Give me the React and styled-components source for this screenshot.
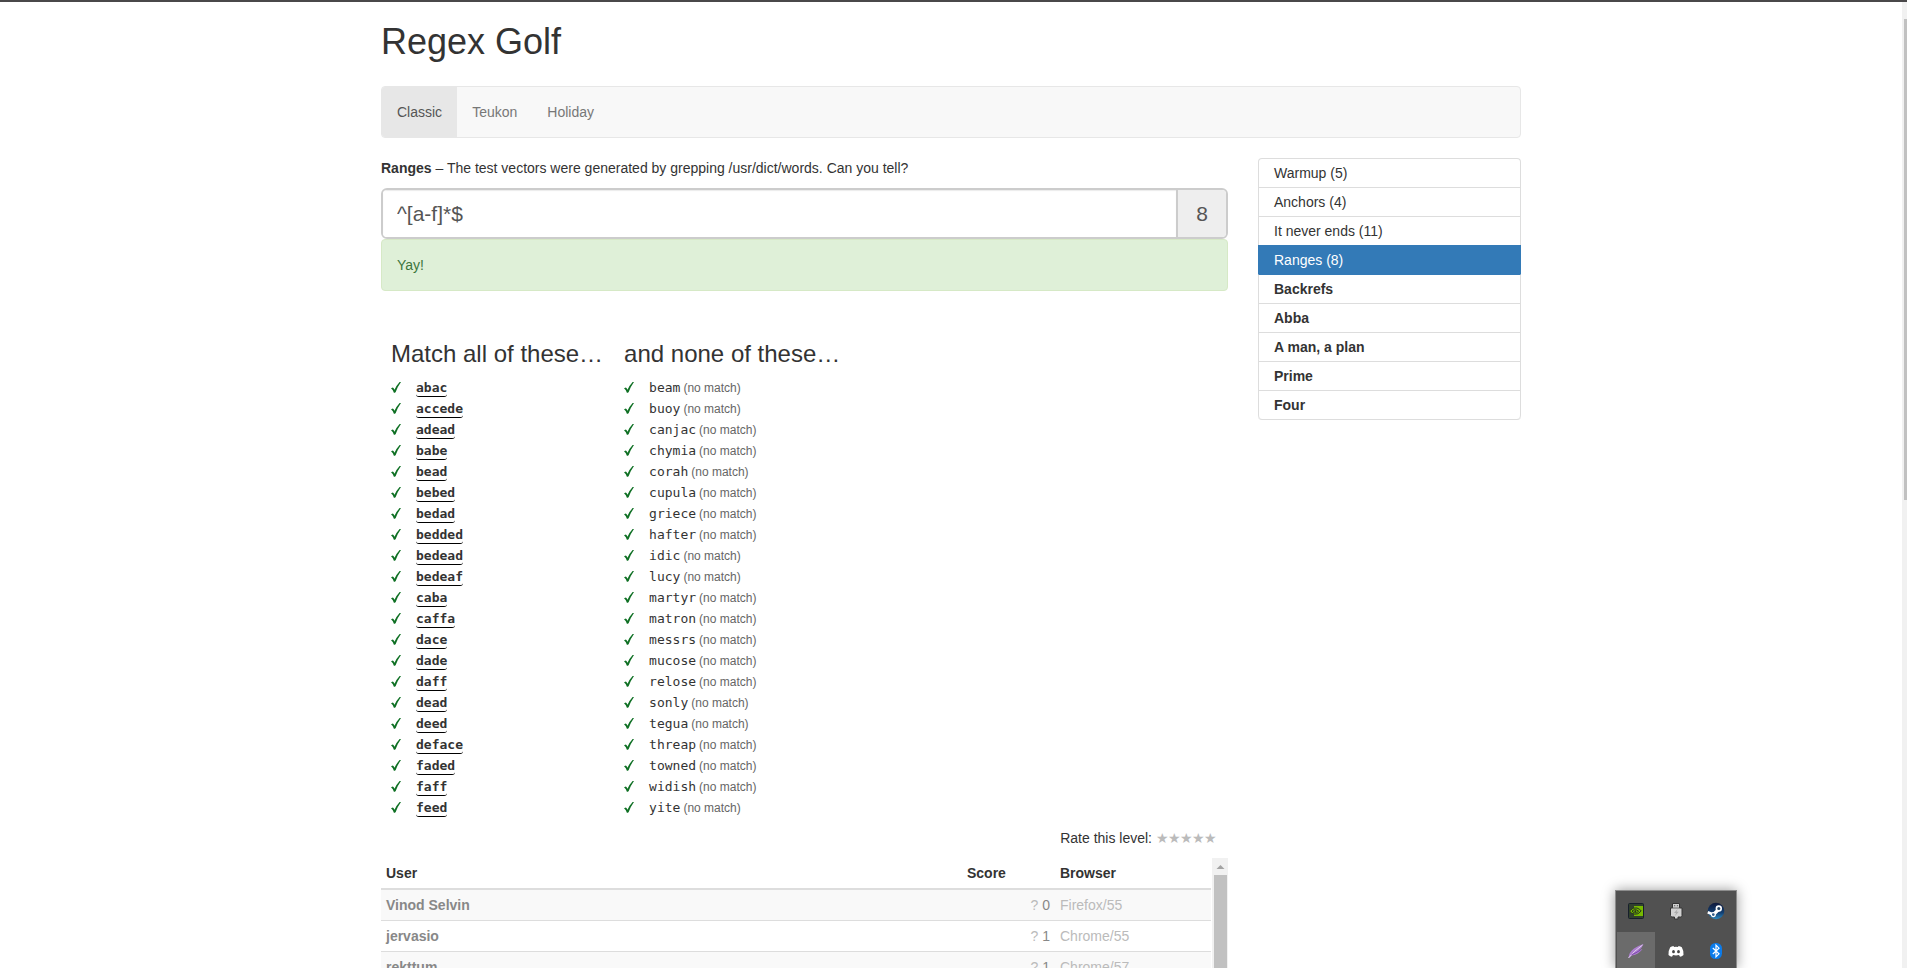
import React, { useState } from "react";
import styled, { createGlobalStyle, css } from "styled-components";

const GlobalStyle = createGlobalStyle`
  *, *::before, *::after { box-sizing: border-box; }
  html, body { margin: 0; height: 100%; overflow: hidden; }
  body {
    background: #fff;
    color: #333;
    font-family: "Liberation Sans", Arial, sans-serif;
    font-size: 14px;
    line-height: 20px;
  }
`;

const Page = styled.div`
  height: 100vh;
  display: flex;
  flex-direction: column;
  overflow: hidden;
`;

const WindowEdge = styled.div`
  flex: none;
  height: 2px;
  background: #4a484a;
`;

const Viewport = styled.div`
  flex: 1;
  min-height: 0;
  display: flex;
`;

const Scroller = styled.div`
  flex: 1;
  min-width: 0;
  overflow: hidden;
`;

const PageScrollbar = styled.div`
  flex: none;
  width: 5px;
  padding: 17px 0 0 2px;
  background: #f1f1f1;
`;

const PageThumb = styled.div`
  height: calc(50% + 6px);
  background: #c1c1c1;
`;

const Container = styled.div`
  max-width: 1170px;
  margin: 0 auto;
  padding: 20px 15px;
`;

const Title = styled.h1`
  margin: 0 0 24px;
  font-size: 36px;
  font-weight: 500;
  line-height: 40px;
`;

const Navbar = styled.nav`
  display: flex;
  margin-bottom: 20px;
  border: 1px solid #e7e7e7;
  border-radius: 4px;
  background: #f8f8f8;
  overflow: hidden;
`;

const NavLink = styled.a`
  padding: 15px;
  color: ${(p) => (p.$active ? "#555" : "#777")};
  background: ${(p) => (p.$active ? "#e7e7e7" : "transparent")};
  text-decoration: none;
`;

const Columns = styled.div`
  display: grid;
  grid-template-columns: minmax(0, 1fr) 263px;
  gap: 30px;
  align-items: start;
`;

const Description = styled.p`
  margin: 0 0 10px;
`;

const InputGroup = styled.div`
  display: flex;
  height: 51px;
  border: 2px solid #ccc;
  border-radius: 6px;
  overflow: hidden;
  color: #555;
  font-size: 21px;
`;

const RegexInput = styled.input`
  flex: 1;
  min-width: 0;
  padding: 0 14px;
  border: 0;
  outline: 0;
  background: #fff;
  box-shadow: inset 0 1px 1px rgba(0, 0, 0, 0.08);
  color: inherit;
  font: inherit;
`;

const Points = styled.output`
  display: flex;
  align-items: center;
  justify-content: center;
  width: 50px;
  border-left: 2px solid #ccc;
  background: #eee;
`;

const Alert = styled.div`
  margin-bottom: 50px;
  padding: 15px;
  border: 1px solid #d6e9c6;
  border-radius: 4px;
  background: #dff0d8;
  color: #3c763d;
`;

const Vectors = styled.div`
  display: flex;
  gap: 21px;
  padding: 0 10px;
  margin-bottom: 10px;
`;

const VectorTitle = styled.h3`
  margin: 0 0 10px;
  font-size: 24px;
  font-weight: 500;
  line-height: 26px;
`;

const WordList = styled.ul`
  margin: 0;
  padding: 0;
  list-style: none;
`;

const WordRow = styled.li`
  display: flex;
  align-items: center;
  height: 21px;
  line-height: 21px;
`;

const Tick = styled.svg`
  flex: none;
  width: 10px;
  height: 11px;
  margin-right: 15px;
  fill: #0f7024;
`;

const Word = styled.code`
  font-family: "DejaVu Sans Mono", Consolas, monospace;
  font-size: 13px;
  ${(p) =>
    p.$matched &&
    css`
      padding-bottom: 1px;
      border-bottom: 1px solid #000;
      border-radius: 3px;
      font-weight: 700;
    `}
`;

const Note = styled.small`
  margin-left: 3px;
  color: #666;
  font-size: 12px;
`;

const Rating = styled.div`
  display: flex;
  justify-content: flex-end;
  gap: 4px;
  margin-bottom: 10px;
  padding-right: 12px;
`;

const Stars = styled.div`
  display: flex;
`;

const Star = styled.button`
  width: 12px;
  padding: 0;
  border: 0;
  background: none;
  color: #bbb;
  font-family: "DejaVu Sans", sans-serif;
  font-size: 14px;
  line-height: 20px;
`;

const Board = styled.div`
  display: flex;
  gap: 1px;
  height: 300px;
  overflow: hidden;
`;

const Scores = styled.table`
  flex: 1;
  align-self: flex-start;
  table-layout: fixed;
  border-collapse: separate;
  border-spacing: 0;
`;

const HeadCell = styled.th`
  width: ${(p) => p.$width || "auto"};
  padding: 5px;
  border-bottom: 2px solid #ddd;
  text-align: left;
`;

const ScoreRow = styled.tr`
  background: ${(p) => (p.$striped ? "#f9f9f9" : "#fff")};
`;

const Cell = styled.td`
  padding: 5px;
  border-bottom: 1px solid #ddd;
  color: ${(p) => (p.$faint ? "#bbb" : "#888")};
  font-weight: ${(p) => (p.$strong ? 700 : 400)};
  text-align: ${(p) => p.$align || "left"};
`;

const Unknown = styled.span`
  color: #bbb;
`;

const BoardScrollbar = styled.div`
  flex: none;
  width: 16px;
  display: flex;
  flex-direction: column;
  background: #f1f1f1;
`;

const ScrollArrow = styled.svg`
  flex: none;
  width: 16px;
  height: 17px;
  fill: #a3a3a3;
`;

const BoardThumb = styled.div`
  flex: 1;
  margin: 0 1px 0 2px;
  background: #c1c1c1;
`;

const LevelList = styled.nav`
  display: flex;
  flex-direction: column;
  border-bottom: 1px solid #ddd;
  border-radius: 4px;
`;

const Level = styled.a`
  padding: 4px 15px;
  border: 1px solid #ddd;
  border-bottom: 0;
  color: #333;
  font-weight: ${(p) => (p.$unsolved ? 700 : 400)};
  text-decoration: none;
  &:first-child { border-radius: 4px 4px 0 0; }
  &:last-child { border-radius: 0 0 4px 4px; }
  &[aria-current] {
    border-color: #337ab7;
    background: #337ab7;
    color: #fff;
  }
  &[aria-current] + a { border-top-color: #337ab7; }
`;

const Tray = styled.div`
  position: fixed;
  right: 170px;
  bottom: 0;
  display: grid;
  grid-template-columns: 38px 38px 38px;
  grid-template-rows: 38px 36px;
  gap: 2px;
  padding: 1px 1px 0;
  border: 1px solid #8c8c8c;
  border-bottom: 0;
  background: #515151;
  box-shadow: 0 0 12px rgba(0, 0, 0, 0.4);
`;

const TrayButton = styled.button`
  display: flex;
  justify-content: center;
  align-items: flex-start;
  padding: 10px 0 0;
  border: 0;
  background: ${(p) => (p.$hovered ? "#6b6b6b" : "transparent")};
`;

const TrayIcon = styled.svg`
  flex: none;
  width: 18px;
  height: 18px;
`;

const matches = [
  "abac", "accede", "adead", "babe", "bead", "bebed", "bedad", "bedded", "bedead", "bedeaf", "caba",
  "caffa", "dace", "dade", "daff", "dead", "deed", "deface", "faded", "faff", "feed",
];

const misses = [
  "beam", "buoy", "canjac", "chymia", "corah", "cupula", "griece", "hafter", "idic", "lucy", "martyr",
  "matron", "messrs", "mucose", "relose", "sonly", "tegua", "threap", "towned", "widish", "yite",
];

const levels = [
  { name: "Warmup", score: 5 },
  { name: "Anchors", score: 4 },
  { name: "It never ends", score: 11 },
  { name: "Ranges", score: 8, active: true },
  { name: "Backrefs" },
  { name: "Abba" },
  { name: "A man, a plan" },
  { name: "Prime" },
  { name: "Four" },
];

const scores = [
  { user: "Vinod Selvin", score: 0, browser: "Firefox/55" },
  { user: "jervasio", score: 1, browser: "Chrome/55" },
  { user: "rekttum", score: 1, browser: "Chrome/57" },
];

const CheckMark = () => (
  <Tick viewBox="0 0 10 11" aria-label="passed">
    <path d="M0 6.3 L1.9 5.5 Q3 6.2 3.5 7.8 Q5.6 3.2 8.6 0 L10 0 Q6.6 4.6 4.6 10.2 L3 11 Q2.1 7.8 0 6.3 Z" />
  </Tick>
);

const NvidiaIcon = () => (
  <TrayIcon viewBox="0 0 18 18">
    <rect x="1.5" y="1.5" width="15" height="15" rx="1" fill="#31402d" stroke="#171f2c" />
    <path d="M7 4h9v10H7z" fill="#76b900" />
    <path d="M2.5 9 Q6 4.8 10 6 Q13 7 14.2 9 Q11 13 7.6 12.2 Q4 11.4 2.5 9Z" fill="#76b900" stroke="#26351c" strokeWidth="1" />
    <path d="M5 9 Q7.4 6.8 9.8 8 L11.6 9.3 Q9.4 11.4 7.6 10.8 Q5.8 10.2 5 9Z" fill="#76b900" stroke="#26351c" strokeWidth="1" />
    <circle cx="8.3" cy="9.2" r="1" fill="#26351c" />
  </TrayIcon>
);

const UsbIcon = () => (
  <TrayIcon viewBox="0 0 18 18">
    <path d="M5.5 1.5h7V6H15v7.5q0 1.5-1.5 1.5H11v2H7.5v-2H5q-1.5 0-1.5-1.5V6h2z" fill="#d2d2d2" stroke="#353535" />
    <path d="M7 3.3h1.3v1H7zM9.8 3.3h1.3v1H9.8z" fill="#555" />
    <path d="M5.5 6h7" stroke="#666" />
    <path d="M10.7 7 7 11h2l-1 3 3.8-4.2H9.6z" fill="#aaa" />
  </TrayIcon>
);

const SteamIcon = () => (
  <TrayIcon viewBox="0 0 18 18">
    <defs>
      <linearGradient id="steam" x1="0" y1="0" x2="0" y2="1">
        <stop offset="0" stopColor="#10193a" />
        <stop offset="0.6" stopColor="#123f72" />
        <stop offset="1" stopColor="#2d8ac0" />
      </linearGradient>
    </defs>
    <circle cx="9" cy="9" r="8.3" fill="url(#steam)" />
    <path d="M.8 10.3 5.5 12.2" stroke="#fff" strokeWidth="2.8" />
    <path d="M6.500 12.500 11.500 7.500" stroke="#fff" strokeWidth="3.2" />
    <circle cx="6.3" cy="12.6" r="2" fill="#315b87" stroke="#fff" strokeWidth="1.2" />
    <circle cx="11.8" cy="6.5" r="2.4" fill="#23405f" stroke="#fff" strokeWidth="1.6" />
  </TrayIcon>
);

const FeatherIcon = () => (
  <TrayIcon viewBox="0 0 18 18">
    <path d="M1.5 16 Q2 10 7 6.5 Q11 3.5 16.5 2 Q15 6 11.5 8.5 L15.5 7 Q11.5 12.5 5 13.5 Z" fill="#ad7fd0" />
    <path d="M1.5 16 Q7 9 15.5 3" fill="none" stroke="#e3d1f0" />
    <path d="M4.5 12.8 Q9 11 13.5 8" fill="none" stroke="#7d45ad" />
  </TrayIcon>
);

const DiscordIcon = () => (
  <TrayIcon viewBox="0 0 18 18">
    <path d="M6.5 4 7 5q2-.4 4 0l.5-1q2 .2 3.3 1.2Q17 9 16.500 13q-1.7 1.5-3.5 1.7l-1-1.6q-3 .8-6 0l-1 1.6Q3.2 14.5 1.5 13 1 9 3.2 5.2 4.5 4.2 6.500 4z" fill="#fff" />
    <ellipse cx="6.5" cy="9.7" rx="1.4" ry="1.6" fill="#444" />
    <ellipse cx="11.5" cy="9.7" rx="1.4" ry="1.6" fill="#444" />
  </TrayIcon>
);

const BluetoothIcon = () => (
  <TrayIcon viewBox="0 0 18 18">
    <rect x="3" y="1" width="12" height="16" rx="5.5" fill="#0b7bea" />
    <path d="M5.8 6 12 11.8 9 14.8V3.2L12 6.2 5.8 12" fill="none" stroke="#fff" strokeWidth="1.2" />
  </TrayIcon>
);

const trayItems = [
  { label: "NVIDIA settings", Icon: NvidiaIcon },
  { label: "Safely remove hardware", Icon: UsbIcon },
  { label: "Steam", Icon: SteamIcon },
  { label: "Feather", Icon: FeatherIcon, hovered: true },
  { label: "Discord", Icon: DiscordIcon },
  { label: "Bluetooth devices", Icon: BluetoothIcon },
];

export default function App() {
  const [pattern, setPattern] = useState("^[a-f]*$");
  return (
    <Page>
      <GlobalStyle />
      <WindowEdge />
      <Viewport>
        <Scroller>
          <Container>
            <Title>Regex Golf</Title>
            <Navbar>
              <NavLink href="#classic" $active>Classic</NavLink>
              <NavLink href="#teukon">Teukon</NavLink>
              <NavLink href="#holiday">Holiday</NavLink>
            </Navbar>
            <Columns>
              <main>
                <Description>
                  <b>Ranges</b> – The test vectors were generated by grepping /usr/dict/words. Can you tell?
                </Description>
                <InputGroup>
                  <RegexInput aria-label="Regular expression" value={pattern} onChange={(e) => setPattern(e.target.value)} />
                  <Points>{pattern.length}</Points>
                </InputGroup>
                <Alert>Yay!</Alert>
                <Vectors>
                  <section>
                    <VectorTitle>Match all of these…</VectorTitle>
                    <WordList>
                      {matches.map((word) => (
                        <WordRow key={word}>
                          <CheckMark />
                          <span>
                            <Word $matched>{word}</Word>
                          </span>
                        </WordRow>
                      ))}
                    </WordList>
                  </section>
                  <section>
                    <VectorTitle>and none of these…</VectorTitle>
                    <WordList>
                      {misses.map((word) => (
                        <WordRow key={word}>
                          <CheckMark />
                          <span>
                            <Word>{word}</Word>
                            <Note>(no match)</Note>
                          </span>
                        </WordRow>
                      ))}
                    </WordList>
                  </section>
                </Vectors>
                <Rating>
                  <span>Rate this level:</span>
                  <Stars>
                    {[1, 2, 3, 4, 5].map((n) => (
                      <Star key={n} type="button" aria-label={`${n} of 5`}>★</Star>
                    ))}
                  </Stars>
                </Rating>
                <Board>
                  <Scores>
                    <thead>
                      <tr>
                        <HeadCell>User</HeadCell>
                        <HeadCell $width="93px">Score</HeadCell>
                        <HeadCell $width="156px">Browser</HeadCell>
                      </tr>
                    </thead>
                    <tbody>
                      {scores.map((row, i) => (
                        <ScoreRow key={row.user} $striped={i % 2 === 0}>
                          <Cell $strong>{row.user}</Cell>
                          <Cell $align="right"><Unknown>?</Unknown> {row.score}</Cell>
                          <Cell $faint>{row.browser}</Cell>
                        </ScoreRow>
                      ))}
                    </tbody>
                  </Scores>
                  <BoardScrollbar>
                    <ScrollArrow viewBox="0 0 16 17"><path d="M4.5 11 8.5 7l4 4z" /></ScrollArrow>
                    <BoardThumb />
                  </BoardScrollbar>
                </Board>
              </main>
              <LevelList aria-label="Levels">
                {levels.map(({ name, score, active }) => (
                  <Level key={name} href="#level" aria-current={active ? "page" : undefined} $unsolved={!score}>
                    {score ? `${name} (${score})` : name}
                  </Level>
                ))}
              </LevelList>
            </Columns>
          </Container>
        </Scroller>
        <PageScrollbar><PageThumb /></PageScrollbar>
      </Viewport>
      <Tray>
        {trayItems.map(({ label, Icon, hovered }) => (
          <TrayButton key={label} type="button" aria-label={label} $hovered={hovered}><Icon /></TrayButton>
        ))}
      </Tray>
    </Page>
  );
}
